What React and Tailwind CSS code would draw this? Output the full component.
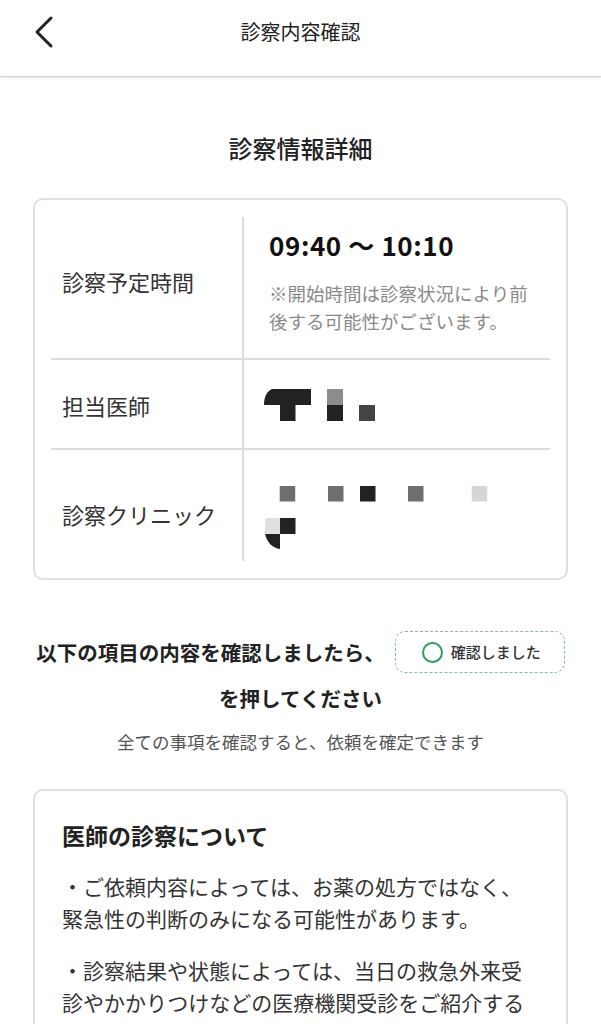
import React from "react";

const FONT = { fontFamily: '"Noto Sans CJK JP", "Noto Sans", sans-serif' };

function Chevron() {
  return (
    <svg width="24" height="34" viewBox="0 0 24 34" className="absolute left-[32px] top-[15px]">
      <path d="M19 3 L5 17 L19 31" fill="none" stroke="#222" strokeWidth="3" strokeLinecap="round" strokeLinejoin="round" />
    </svg>
  );
}

function DoctorMosaic() {
  return (
    <svg width="112" height="32" viewBox="0 0 112 32" className="-ml-[5px] block">
      <path d="M8 0 H47 V16 H31.5 V32 H16 V16 H0 C0 8 3 2 8 0 Z" fill="#222" />
      <rect x="63" y="0" width="16" height="16" fill="#8c8c8c" />
      <rect x="63" y="16" width="16" height="16" fill="#222" />
      <rect x="95" y="16" width="16" height="16" fill="#444" />
    </svg>
  );
}

function ClinicMosaic() {
  return (
    <svg width="224" height="64" viewBox="0 0 224 64" className="-ml-[5px] block">
      <rect x="15.7" y="0" width="15.5" height="15.5" fill="#6e6e6e" />
      <rect x="64" y="0" width="15.5" height="15.5" fill="#6e6e6e" />
      <rect x="96" y="0" width="15.5" height="15.5" fill="#222" />
      <rect x="144" y="0" width="15.5" height="15.5" fill="#6e6e6e" />
      <rect x="207.7" y="0" width="15.5" height="15.5" fill="#d6d6d6" />
      <path d="M3 32 H16 V48 H1 V35 C1 33 2 32 3 32 Z" fill="#e0e0e0" />
      <rect x="16" y="32" width="15.5" height="16" fill="#222" />
      <path d="M1 48 H16 V63 C8 62 3 56 1 48 Z" fill="#222" />
    </svg>
  );
}

export default function App() {
  return (
    <div className="min-h-[1024px] w-full bg-white text-[#222]" style={FONT}>
      {/* Header */}
      <div className="relative h-[77px] w-full border-b border-[#d6d6d6] bg-white shadow-[0_1px_3px_rgba(0,0,0,0.10)]">
        <Chevron />
        <div className="pt-[17px] text-center text-[20px] leading-[30px] text-[#222]">診察内容確認</div>
      </div>

      {/* Section title */}
      <div className="mt-[53px] text-center text-[24px] font-medium leading-[36px] text-[#222]">診察情報詳細</div>

      {/* Info card */}
      <div className="mx-[33px] mt-[32px] rounded-[10px] border-2 border-[#e0e0e0] px-[16px] py-[17px]">
        {/* Row 1 */}
        <div className="flex h-[143px] border-b-2 border-[#dcdcdc]">
          <div className="flex w-[193px] shrink-0 items-center border-r-2 border-[#dcdcdc] pb-[14px] pl-[11px] text-[22px] leading-[32px] text-[#333]">
            診察予定時間
          </div>
          <div className="flex-1 pl-[25px] pr-[18px] pt-[12px]">
            <div className="text-[26px] font-bold leading-[32px] tracking-[0.6px] text-[#111]">
              09:40 〜 10:10
            </div>
            <div className="mt-[18px] text-[18.5px] leading-[28px] text-[#8a8a8a]">
              ※開始時間は診察状況により前後する可能性がございます。
            </div>
          </div>
        </div>
        {/* Row 2 */}
        <div className="flex h-[90px] border-b-2 border-[#dcdcdc]">
          <div className="flex w-[193px] shrink-0 items-center border-r-2 border-[#dcdcdc] pl-[11px] pt-[2px] text-[22px] leading-[32px] text-[#333]">
            担当医師
          </div>
          <div className="flex flex-1 items-center pl-[25px] pt-[2px]">
            <DoctorMosaic />
          </div>
        </div>
        {/* Row 3 */}
        <div className="flex h-[111px]">
          <div className="flex w-[193px] shrink-0 items-center border-r-2 border-[#dcdcdc] pl-[11px] pt-[16px] text-[22px] leading-[32px] text-[#333]">
            診察クリニック
          </div>
          <div className="flex flex-1 items-center pl-[25px] pt-[24px]">
            <ClinicMosaic />
          </div>
        </div>
      </div>

      {/* Instruction */}
      <div className="mt-[49px] flex h-[46px] items-center justify-center text-[20.5px] font-bold text-[#222]">
        <span>以下の項目の内容を確認しましたら、</span>
        <span className="ml-[10px] inline-flex h-[42px] w-[170px] items-center rounded-[10px] border-[1.5px] border-dashed border-[#78c493] pl-[26px]">
          <span className="h-[21px] w-[21px] rounded-full border-2 border-[#2e9e5b]" />
          <span className="ml-[8px] text-[15px] font-medium leading-[20px] text-[#333]">確認しました</span>
        </span>
      </div>
      <div className="text-center text-[20.5px] font-bold leading-[46px] text-[#222]">を押してください</div>
      <div className="mt-[7px] text-center text-[17.5px] leading-[28px] text-[#555]">
        全ての事項を確認すると、依頼を確定できます
      </div>

      {/* Notice card */}
      <div className="mx-[33px] mt-[33px] rounded-[10px] border-2 border-[#e0e0e0] px-[27px] pb-[30px] pt-[27px]">
        <div className="text-[23px] font-bold leading-[34px] text-[#222]">医師の診察について</div>
        <p className="mt-[18px] text-[21px] leading-[32px] text-[#333]">
          ・ご依頼内容によっては、お薬の処方ではなく、緊急性の判断のみになる可能性があります。
        </p>
        <p className="mt-[20px] text-[21px] leading-[32px] text-[#333]">
          ・診察結果や状態によっては、当日の救急外来受診やかかりつけなどの医療機関受診をご紹介する場合があります。
        </p>
      </div>
    </div>
  );
}
